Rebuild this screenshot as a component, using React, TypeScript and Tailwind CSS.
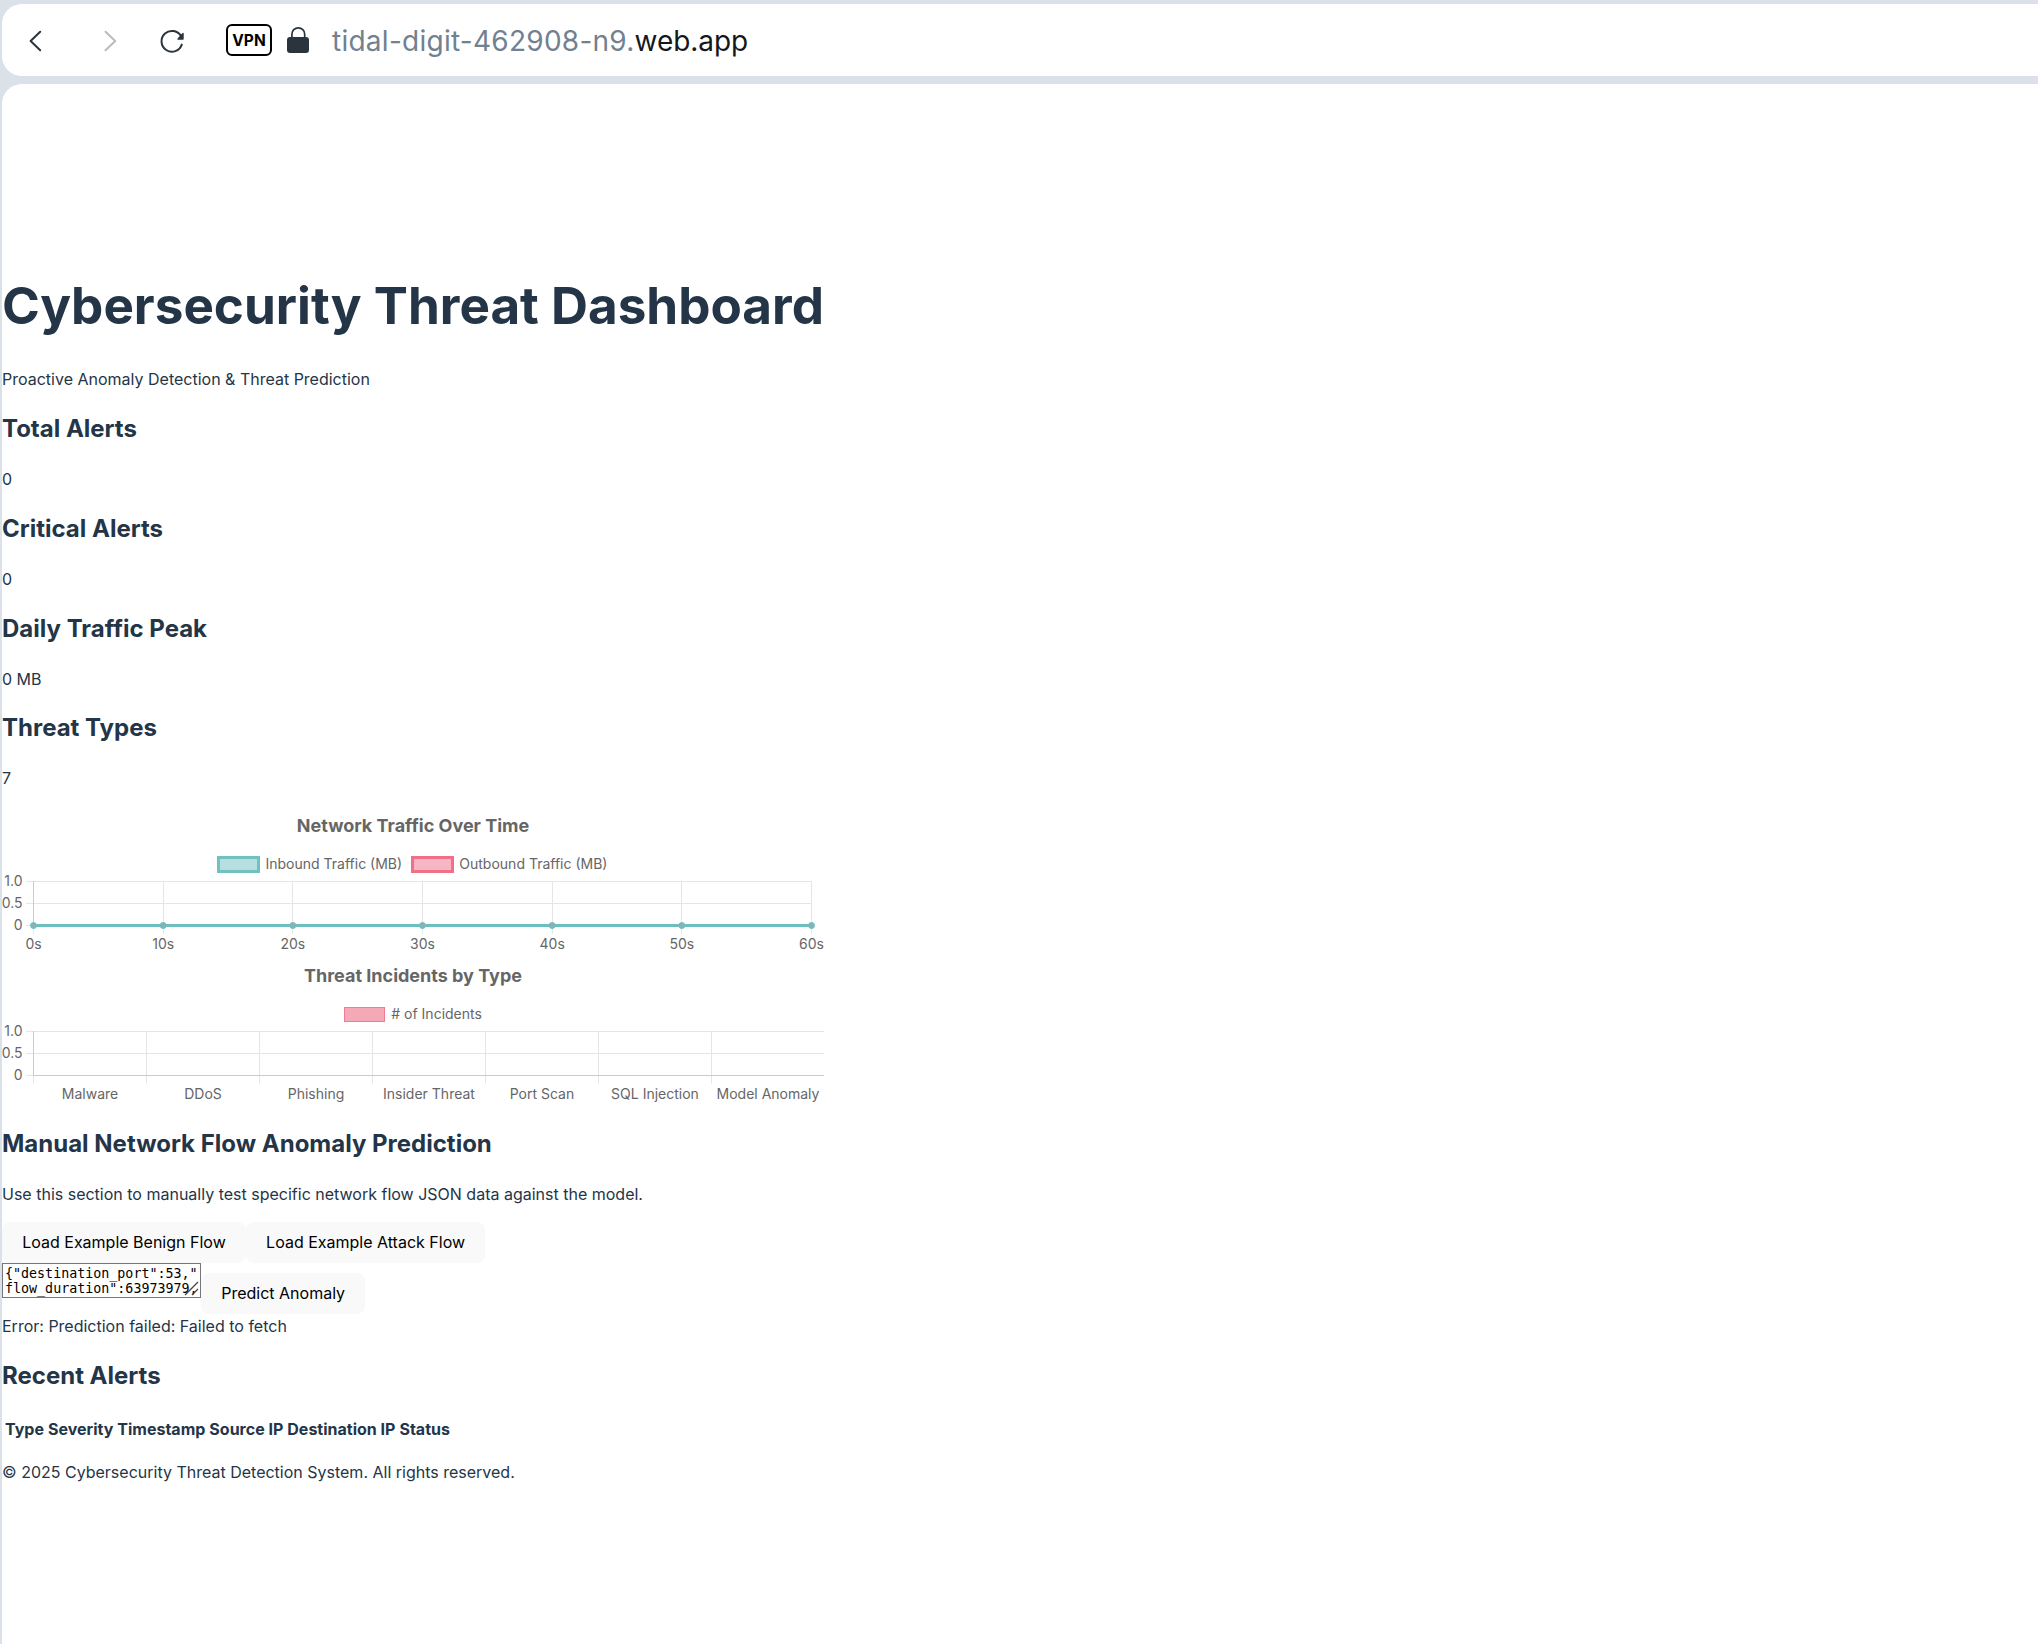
import React from 'react';

const FLOW_JSON =
  '{"destination_port":53,"\nflow_duration":63973979,\n"total_fwd_packets":2,"t';

const stats = [
  { label: 'Total Alerts', value: '0' },
  { label: 'Critical Alerts', value: '0' },
  { label: 'Daily Traffic Peak', value: '0 MB' },
  { label: 'Threat Types', value: '7' },
];

const seconds = ['0s', '10s', '20s', '30s', '40s', '50s', '60s'];
const threats = ['Malware', 'DDoS', 'Phishing', 'Insider Threat', 'Port Scan', 'SQL Injection', 'Model Anomaly'];
const columns = ['Type', 'Severity', 'Timestamp', 'Source IP', 'Destination IP', 'Status'];

const GRID = '#e5e5e5';
const LEFT = 31.5;

function BrowserBar() {
  return (
    <header className="flex h-[72px] shrink-0 items-center rounded-l-[20px] bg-white">
      <svg className="ml-[18px] h-8 w-8 shrink-0" viewBox="0 0 32 32" fill="none" stroke="#2b343c" strokeWidth="2" strokeLinecap="round" strokeLinejoin="round">
        <path d="M20.2 8 10.6 17.2 20.2 26.4" transform="translate(0 -.2)" />
      </svg>
      <svg className="ml-[42px] h-8 w-8 shrink-0" viewBox="0 0 32 32" fill="none" stroke="#b8bbbd" strokeWidth="2" strokeLinecap="round" strokeLinejoin="round">
        <path d="M11.5 7.8 21.2 17 11.5 26.2" />
      </svg>
      <svg className="ml-[30px] h-8 w-8 shrink-0" viewBox="0 0 32 32" fill="none">
        <path d="M25.8 20.6A10.4 10.4 0 1 1 25.2 12.6" stroke="#2b343c" strokeWidth="2" strokeLinecap="round" />
        <path d="M26.2 9.2Q27.5 8 27.7 9.5V15Q27.7 15.7 27 15.7H22Q20.6 15.5 21.6 14.4Z" fill="#2b343c" />
      </svg>
      <div className="ml-[38px] flex h-8 w-[46px] shrink-0 items-center justify-center rounded-[6px] border-2 border-black pt-px text-[15.5px] font-bold leading-none text-black">
        VPN
      </div>
      <svg className="ml-[15px] h-7 w-[22px] shrink-0" viewBox="0 0 22 28" fill="none">
        <path d="M4.9 13V8.2a6.4 6.4 0 0 1 12.8 0V13" stroke="#2b343c" strokeWidth="1.7" />
        <rect y="11" width="22" height="16" rx="3" fill="#2b343c" />
      </svg>
      <div className="ml-[23px] whitespace-nowrap pt-px text-[28px] leading-[34px] tracking-[0.26px] text-[#718190]">
        tidal-digit-462908-n9.<span className="tracking-[-0.05px] text-[#14181c]">web.app</span>
      </div>
    </header>
  );
}

function YAxis({ right }: { right: number }) {
  return (
    <g>
      {['1.0', '0.5', '0'].map((t, i) => (
        <g key={t}>
          <path d={`M24 ${75.5 + i * 22}H${right}`} stroke={GRID} />
          <text x="20.5" y={80.3 + i * 22} textAnchor="end">{t}</text>
        </g>
      ))}
    </g>
  );
}

function TrafficChart() {
  const step = 129.67;
  return (
    <svg className="block h-[150px] w-[822px]" viewBox="0 0 822 150" fill="#666" fontSize="14">
      <text x="411" y="26" fontSize="18" fontWeight="700" textAnchor="middle">Network Traffic Over Time</text>
      <rect x="216.5" y="51.5" width="40" height="14" fill="#b7dfdf" stroke="#70c1c1" strokeWidth="3" />
      <text x="263.5" y="63.3">Inbound Traffic (MB)</text>
      <rect x="410.5" y="51.5" width="40" height="14" fill="#f8b5c4" stroke="#f06f89" strokeWidth="3" />
      <text x="457.3" y="63.3">Outbound Traffic (MB)</text>
      <YAxis right={810} />
      {seconds.map((t, i) => (
        <g key={t}>
          <path d={`M${Math.round(LEFT + i * step - 0.5) + 0.5} 75V127.5`} stroke={GRID} />
          <text x={LEFT + i * step} y="143.4" textAnchor="middle">{t}</text>
        </g>
      ))}
      <path d="M31.5 75V120" stroke="#cbcbcb" />
      <path d="M31.5 119.5H809.5" stroke="#6cbfc0" strokeWidth="3" />
      {seconds.map((t, i) => (
        <circle key={t} cx={LEFT + i * step} cy="119.5" r="3" fill="#8ab2b5" stroke="#6cbfc0" />
      ))}
    </svg>
  );
}

function IncidentChart() {
  const step = 113;
  return (
    <svg className="block h-[150px] w-[822px]" viewBox="0 0 822 150" fill="#666" fontSize="14">
      <text x="411" y="26" fontSize="18" fontWeight="700" textAnchor="middle">Threat Incidents by Type</text>
      <rect x="342.5" y="51.5" width="40" height="14" fill="#f5a8b6" stroke="#ef7c90" />
      <text x="389.3" y="63.3">{'# of Incidents'}</text>
      <YAxis right={822} />
      {threats.map((t, i) => (
        <g key={t}>
          <path d={`M${LEFT + i * step} 75V127.5`} stroke={GRID} />
          <text x={LEFT + (i + 0.5) * step} y="143.4" textAnchor="middle">{t}</text>
        </g>
      ))}
      <path d="M31.5 75V119.5H822" fill="none" stroke="#cbcbcb" />
    </svg>
  );
}

function Heading({ children }: { children: React.ReactNode }) {
  return <h2 className="my-[19.92px] text-[24px] font-bold leading-[36px]">{children}</h2>;
}

function ActionButton({ children }: { children: React.ReactNode }) {
  return (
    <button className="shrink-0 rounded-lg border border-transparent bg-[#f9f9f9] px-[19.2px] pb-[9.2px] pt-[10px] text-[16px] font-normal leading-[19.36px] text-black">
      {children}
    </button>
  );
}

export default function App() {
  return (
    <div className="flex h-[1644px] w-full flex-col gap-2 overflow-hidden bg-[#dae1e8] pl-[2px] pt-1 font-['Inter',sans-serif]">
      <BrowserBar />
      <main className="flow-root grow rounded-tl-[20px] bg-white pt-[192.5px] text-[16px] leading-6 text-[#243548]">
        <h1 className="mb-[34.3px] text-[51.2px] font-bold leading-[56.32px]">Cybersecurity Threat Dashboard</h1>
        <p>Proactive Anomaly Detection &amp; Threat Prediction</p>
        {stats.map((s) => (
          <section key={s.label}>
            <Heading>{s.label}</Heading>
            <p>{s.value}</p>
          </section>
        ))}
        <div className="mt-4">
          <TrafficChart />
          <IncidentChart />
        </div>
        <Heading>Manual Network Flow Anomaly Prediction</Heading>
        <p>Use this section to manually test specific network flow JSON data against the model.</p>
        <div className="mt-4 flex">
          <ActionButton>Load Example Benign Flow</ActionButton>
          <ActionButton>Load Example Attack Flow</ActionButton>
        </div>
        <div className="flex items-start">
          <div className="relative">
            <textarea
              readOnly
              value={FLOW_JSON}
              className="block h-[35.5px] w-[199px] resize-none overflow-hidden whitespace-pre border border-[#767676] bg-white p-[2px] font-['DejaVu_Sans_Mono',monospace] text-[13.333px] leading-[15.5px] text-black"
            />
            <svg className="absolute bottom-[2px] right-[2px] h-[15px] w-[15px]" viewBox="0 0 15 15" stroke="#444" strokeWidth="1.3">
              <path d="M1 14 14 1M8 14 14 8" />
            </svg>
          </div>
          <div className="flex pt-[10.5px]">
            <ActionButton>Predict Anomaly</ActionButton>
          </div>
        </div>
        <div>Error: Prediction failed: Failed to fetch</div>
        <Heading>Recent Alerts</Heading>
        <table className="border-separate border-spacing-[2px]">
          <thead>
            <tr>
              {columns.map((c) => (
                <th key={c} className="p-px font-bold">{c}</th>
              ))}
            </tr>
          </thead>
        </table>
        <footer className="mt-4">
          <p>© 2025 Cybersecurity Threat Detection System. All rights reserved.</p>
        </footer>
      </main>
    </div>
  );
}
